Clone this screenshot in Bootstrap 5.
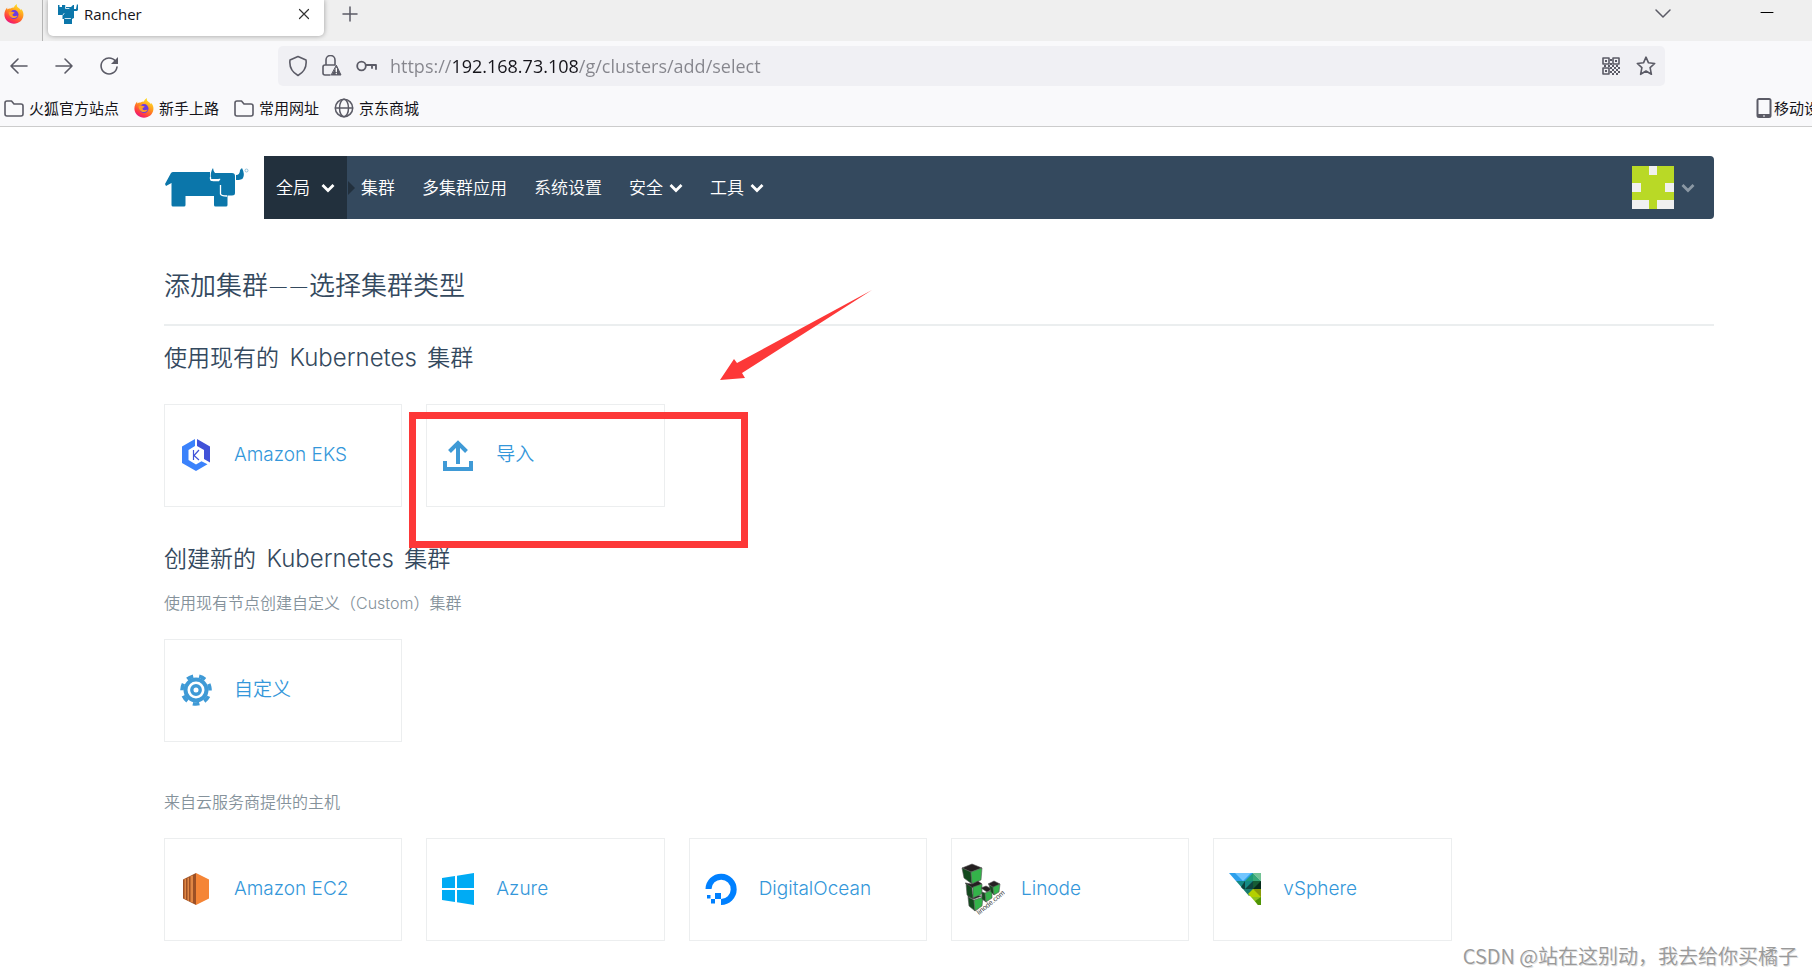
<!DOCTYPE html>
<html lang="zh-CN">
<head>
<meta charset="utf-8">
<meta name="viewport" content="width=device-width, initial-scale=1">
<title>Rancher</title>
<link href="https://cdn.jsdelivr.net/npm/bootstrap@5.3.0/dist/css/bootstrap.min.css" rel="stylesheet">
<style>
  :root { --ink: #34495e; --link: #3497da; --chrome-icon: #5b5b66; }
  body { font-family: Inter, "Noto Sans CJK SC", sans-serif; font-weight: 350; color: var(--ink); background: #fff; min-height: 100vh; overflow: hidden; position: relative; }
  svg { display: block; flex: none; }
  button { background: none; border: 0; padding: 0; color: inherit; font-weight: inherit; }
  a { text-decoration: none; }

  /* browser chrome */
  .chrome { font-family: "Open Sans", "Noto Sans CJK SC", sans-serif; font-weight: 400; font-size: 15px; line-height: 20px; color: #15141a; background: #f9f9fb; border-bottom: 1px solid #ccc; }
  .chrome svg { stroke-linecap: round; stroke-linejoin: round; }
  .tabstrip { height: 41px; background: #efefef; }
  .pinned { width: 43px; border-right: 1px solid #b5b5b5; padding: 4px 0 0 4px; }
  .tab-active { width: 276px; height: 36px; margin-left: 5px; padding: 0 14px 8px 10px; gap: 6px; background: #fff; border-radius: 0 0 5px 5px; box-shadow: 0 0 5px rgba(0,0,0,.35); }
  .strip-btn { height: 27px; }
  .minimize { margin: 0 38px 0 88px; }
  .toolbar { padding: 5px 147px 4px 9px; height: 49px; color: var(--chrome-icon); }
  .history-btns { gap: 25px; }
  .urlbar { background: #f0f0f4; border-radius: 5px; height: 40px; padding: 0 9px 0 10px; margin-left: 159px; }
  .url-icons { gap: 14px; margin-right: 12px; }
  .urlbar input { border: 0; outline: 0; padding: 0; min-width: 0; font-size: 18px; font-weight: 400; line-height: 24px; color: transparent;
    background: linear-gradient(90deg, #85858c 62px, #15141a 62px, #15141a 188px, #85858c 188px); -webkit-background-clip: text; background-clip: text; }
  .bookmarks { height: 36px; padding-left: 4px; gap: 15px; white-space: nowrap; }
  .bookmarks a { color: #15141a; gap: 5px; }
  .bookmarks svg { color: var(--chrome-icon); }
  .bookmarks .mobile-mark { width: 56px; overflow: hidden; gap: 1px; }

  /* rancher page */
  .page { padding: 29px 98px 0 164px; position: relative; }
  .brand { width: 100px; }
  .topnav { height: 63px; background: #34495e; border-radius: 0 4px 4px 0; color: #fff; font-size: 17px; line-height: 24px; }
  .topnav a, .topnav button { color: #fff; gap: 6px; }
  .scope { width: 83px; padding: 0 12px; background: #22303d; height: 63px; position: relative; }
  .scope::after { content: ""; position: absolute; left: 84px; top: 25px; border: 7px solid transparent; border-left-color: #22303d; border-right-width: 0; }
  .menu { gap: 27px; padding-left: 14px; }
  .topnav .account { margin-right: 19px; gap: 7px; }
  h1 { font-size: 26px; line-height: 32px; font-weight: 350; margin: 50px 0 22px; }
  h1 span { font-family: Lato, sans-serif; }
  .rule { border-top: 2px solid #ebeeef; }
  h2 { font-size: 23px; line-height: 28px; font-weight: 350; margin: 18px 0 32px; }
  h2 span { font-size: 24px; margin: 0 4px; }
  .h-create { margin: 38px 0 18px; }
  .note { font-size: 16px; line-height: 24px; color: #85929b; margin: 0 0 24px; }
  .note-hosts { margin-top: 48px; }
  .tile { height: 103px; border: 1px solid #eceeef; padding: 0 0 1px 9px; gap: 16px; color: var(--link); font-size: 19px; line-height: 24px; }
  .tile-icon { width: 44px; display: flex; justify-content: center; flex: none; }
  .callout { position: absolute; left: 409px; top: 162px; }
  .watermark { position: absolute; right: 14px; bottom: 7px; font-family: "Noto Sans CJK SC", sans-serif; font-size: 20px; line-height: 28px; color: #999; text-shadow: 1px 1px 0 #ddd; }
</style>
</head>
<body>
<svg width="0" height="0" class="position-absolute" aria-hidden="true">
  <defs>
    <linearGradient id="fxFlame" x1=".8" y1=".1" x2=".3" y2="1"><stop offset="0" stop-color="#ffe226"/><stop offset=".45" stop-color="#ff8a1e"/><stop offset=".8" stop-color="#ff3647"/><stop offset="1" stop-color="#e31587"/></linearGradient>
    <symbol id="fx" viewBox="0 0 20 20">
      <path fill="url(#fxFlame)" d="M13 0c-.6 2 .3 3 1.700 4 1 .6 1.800 1.300 2.300 2.300.1-.6.1-1-.1-1.600C19 6.500 19.700 9 19.400 11.500 18.900 16.300 14.900 19.700 10 19.700S.6 15.800.4 10.900C.3 8 1.500 5.400 3.200 3.600c-.1.8 0 1.300.2 1.800C4.200 4.600 5.500 4.300 6.600 4.600 7.600 3.700 9 3.300 10 3.500 10.300 2 11.500.7 13 0z"/>
      <circle cx="10" cy="10.600" r="4.500" fill="#6c3be0"/>
      <path fill="#ff9d25" d="M4.500 8.500c1.500-1.300 3.300-1 4.600-.4l1.500.3c0 .9-1.600 1-2 1.900-.2 1 .5 2 1.900 2 1.200 0 2-.8 3-.4-.8 1.700-3.500 2.800-5.600 1.800C5.800 12.800 4.800 11 4.500 8.500z"/>
    </symbol>
    <symbol id="folder" viewBox="0 0 20 17"><path d="M1 14V3a2 2 0 0 1 2-2h4.500l2.500 3h7a2 2 0 0 1 2 2v8a2 2 0 0 1-2 2H3a2 2 0 0 1-2-2z" fill="none" stroke="currentColor" stroke-width="1.600"/></symbol>
    <symbol id="chev" viewBox="0 0 14 10"><path d="M1.500 2 7 7.500 12.500 2" fill="none" stroke="currentColor" stroke-width="2.800"/></symbol>
  </defs>
</svg>

<header class="chrome">
  <div class="tabstrip d-flex">
    <div class="pinned"><svg width="20" height="20"><use href="#fx"/></svg></div>
    <div class="tab-active d-flex align-items-center">
      <svg width="20" height="20" viewBox="0 0 20 20" fill="#0b76aa"><path d="M0 1h1.500v2H4V1h3l1 2h5l2-2h1v13l-2 1v5H6v-5H4.500v-4H0z"/><path d="M16 5h2l1-5 1 1v5l-1 1h-3z"/><path d="M5 11l1-1.500M7 14.500h5.500M7.500 2.500v2H11" fill="none" stroke="#fff" stroke-width=".8"/></svg>
      <span class="me-auto">Rancher</span>
      <button aria-label="关闭标签页"><svg width="12" height="12" viewBox="0 0 12 12"><path d="M1.500 1.500l9 9M10.500 1.500l-9 9" stroke="#333" stroke-width="1.200"/></svg></button>
    </div>
    <button class="strip-btn ms-3" aria-label="新标签页"><svg width="20" height="20" viewBox="0 0 20 20"><path d="M10 3v14M3 10h14" stroke="#5b5b66" stroke-width="1.500"/></svg></button>
    <button class="strip-btn ms-auto" aria-label="列出标签页"><svg width="18" height="12" viewBox="0 0 18 12"><path d="M2 2l7 7 7-7" fill="none" stroke="#5b5b66" stroke-width="1.500"/></svg></button>
    <button class="strip-btn minimize" aria-label="最小化"><svg width="14" height="12" viewBox="0 0 14 12"><path d="M1 4.500h12" stroke="#000"/></svg></button>
  </div>
  <div class="toolbar d-flex align-items-center">
    <div class="history-btns d-flex align-items-center">
      <button aria-label="后退"><svg width="20" height="18" viewBox="0 0 20 18"><path d="M18 9H2M9 2L2 9l7 7" fill="none" stroke="currentColor" stroke-width="1.600"/></svg></button>
      <button aria-label="前进"><svg width="20" height="18" viewBox="0 0 20 18"><path d="M2 9h16M11 2l7 7-7 7" fill="none" stroke="currentColor" stroke-width="1.600"/></svg></button>
      <button aria-label="刷新"><svg width="20" height="20" viewBox="0 0 20 20"><path d="M17.500 7A8 8 0 1 0 18 11" fill="none" stroke="currentColor" stroke-width="1.600"/><path d="M19 1v7h-7z" fill="currentColor"/></svg></button>
    </div>
    <div class="urlbar d-flex align-items-center flex-grow-1">
      <div class="url-icons d-flex align-items-center">
        <svg width="20" height="22" viewBox="0 0 20 22"><path d="M10 1.500l8 3.500c.8 6-2 12-8 15.500C4 17 1.200 11 2 5z" fill="none" stroke="currentColor" stroke-width="1.600"/></svg>
        <svg width="20" height="22" viewBox="0 0 20 22"><path d="M8 20H3a2 2 0 0 1-2-2v-6a2 2 0 0 1 2-2h10M4 10V5a4 4 0 0 1 9 0v5" fill="none" stroke="currentColor" stroke-width="1.600"/><path d="M14.500 10.500l4.500 9.500H9.500z" fill="currentColor" stroke="currentColor"/><path d="M14.300 13.500v3M14.300 18.500v.1" stroke="#fff" stroke-width="1.400"/></svg>
        <svg width="22" height="12" viewBox="0 0 22 12"><g fill="none" stroke="currentColor" stroke-width="1.800"><circle cx="5.500" cy="6" r="4.300"/><path d="M10 5h10v4M16 5v3"/></g></svg>
      </div>
      <input class="flex-grow-1" type="text" aria-label="地址" value="https://192.168.73.108/g/clusters/add/select">
      <button aria-label="二维码"><svg width="18" height="18" viewBox="0 0 18 18"><g fill="none" stroke="currentColor" stroke-width="1.600"><path d="M1 1h6v6H1zM11 1h6v6h-6zM1 11h6v6H1z"/></g><path fill="currentColor" d="M3 3h2v2H3zM13 3h2v2h-2zM3 13h2v2H3zM8 2h2v2H8zM8 6h2v2H8zM2 8h2v2H2zM6 8h2v2H6zM10 8h2v2h-2zM14 8h2v2h-2zM8 10h2v2H8zM12 10h2v2h-2zM16 10h2v2h-2zM10 12h2v2h-2zM14 12h2v2h-2zM8 14h2v2H8zM12 14h2v2h-2zM16 14h2v2h-2zM10 16h2v2h-2zM14 16h2v2h-2z"/></svg></button>
      <button class="ms-3" aria-label="收藏"><svg width="20" height="20" viewBox="0 0 20 20"><path d="M10 1.200l2.500 5.600 6.200.7-4.600 4.200 1.300 6.600-5.400-3.300-5.400 3.300 1.300-6.600L1.300 7.500l6.200-.7z" fill="none" stroke="currentColor" stroke-width="1.600"/></svg></button>
    </div>
  </div>
  <nav class="bookmarks d-flex align-items-center" aria-label="书签">
    <a href="#" class="d-flex align-items-center"><svg width="20" height="17"><use href="#folder"/></svg>火狐官方站点</a>
    <a href="#" class="d-flex align-items-center"><svg width="20" height="20"><use href="#fx"/></svg>新手上路</a>
    <a href="#" class="d-flex align-items-center"><svg width="20" height="17"><use href="#folder"/></svg>常用网址</a>
    <a href="#" class="d-flex align-items-center"><svg width="20" height="20" viewBox="0 0 20 20"><g fill="none" stroke="currentColor" stroke-width="1.500"><circle cx="10" cy="10" r="8.700"/><ellipse cx="10" cy="10" rx="4.500" ry="8.700"/><path d="M1.500 10h17"/></g></svg>京东商城</a>
    <a href="#" class="mobile-mark d-flex align-items-center ms-auto"><svg width="17" height="20" viewBox="0 0 17 20"><path fill="currentColor" fill-rule="evenodd" d="M3 0h10a2.500 2.500 0 0 1 2.500 2.500v15A2.500 2.500 0 0 1 13 20H3a2.500 2.500 0 0 1-2.500-2.500v-15A2.500 2.500 0 0 1 3 0zM2.500 2v14h11V2zM7 17.500v1h2v-1z"/></svg>移动设</a>
  </nav>
</header>

<main class="page">
  <div class="d-flex align-items-center">
    <a href="#" class="brand" aria-label="Rancher">
      <svg width="86" height="40" viewBox="-1 0 86 40" fill="#0b76aa"><path d="M0 16L6 5Q7 4 8 4H45V11Q45 13 47 13H54Q56 12 55 10V5H67Q70 5 70 8V25Q70 27.500 67 27.500H62.500V37Q62.500 38.500 61 38.500H50.500Q49 38.500 49 37V28H20.500V37Q20.500 38.500 19 38.500H8Q6.500 38.500 6.500 37V15L1 18Z"/><path d="M46 11Q45 4 48 0Q48.500 4 50 5H56V10Q55 11 53 11Z"/><path d="M71 12V7Q75 7 75 2L77 0Q80 6 78 10Q77 12 71 12Z"/><path d="M45.500 9Q45 12.500 48 12.500H54M55.500 17V26Q56 28 62 28" fill="none" stroke="#fff" stroke-width="1.300"/><circle cx="81.500" cy="2.500" r="1.500" fill="none" stroke="#7fb5d0" stroke-width=".8"/></svg>
    </a>
    <nav class="topnav d-flex align-items-center flex-grow-1">
      <button class="scope d-flex align-items-center justify-content-between">全局<svg width="14" height="10"><use href="#chev"/></svg></button>
      <div class="menu d-flex align-items-center">
        <a href="#">集群</a>
        <a href="#">多集群应用</a>
        <a href="#">系统设置</a>
        <button class="d-flex align-items-center">安全<svg width="14" height="10"><use href="#chev"/></svg></button>
        <button class="d-flex align-items-center">工具<svg width="14" height="10"><use href="#chev"/></svg></button>
      </div>
      <button class="account d-flex align-items-center ms-auto" aria-label="用户菜单">
        <svg width="42" height="43" viewBox="0 0 42 43"><path fill="#b9d926" d="M0 0h42v43H0z"/><path fill="#f0f0f0" d="M17 0h8v9h-8zM0 17h9v9H0zM33 17h9v9h-9zM0 34h17v9H0zM25 34h17v9H25z"/></svg>
        <svg width="14" height="10" color="#8b98a4"><use href="#chev"/></svg>
      </button>
    </nav>
  </div>

  <h1>添加集群<span>——</span>选择集群类型</h1>
  <div class="rule"></div>

  <h2>使用现有的 <span>Kubernetes</span> 集群</h2>
  <div class="row gx-4">
    <div class="col-2"><a href="#" class="tile d-flex align-items-center"><span class="tile-icon"><svg width="28" height="32" viewBox="0 0 28 32"><path fill="#3b82fb" d="M13 0v7L6.500 11v10L14 25.500l5.500-3.200 6 3L14 32 0 24V7.500z"/><path fill="#4152d8" d="M15 0l13 7.500v16l-6-3.500V11L15 7z"/><path d="M11.500 11v10M17 11l-5 5.500 5 4.500" fill="none" stroke="#4152d8" stroke-width="1.200"/></svg></span>Amazon EKS</a></div>
    <div class="col-2"><a href="#" class="tile d-flex align-items-center"><span class="tile-icon"><svg width="30" height="31" viewBox="0 0 30 31" fill="none" stroke="#3f9ad6" stroke-width="4"><path d="M2 21v8h26v-8M15 24V4M6.500 11.500L15 3l8.500 8.500"/></svg></span>导入</a></div>
  </div>

  <h2 class="h-create">创建新的 <span>Kubernetes</span> 集群</h2>
  <p class="note">使用现有节点创建自定义（Custom）集群</p>
  <div class="row gx-4">
    <div class="col-2"><a href="#" class="tile d-flex align-items-center"><span class="tile-icon"><svg width="32" height="32" viewBox="-16 -16 32 32" fill="none" stroke="#3f9ad6"><circle r="10.500" stroke-width="4"/><circle r="4.200" stroke-width="3.400"/><circle r="14" stroke-width="3.600" stroke-dasharray="6.600 5.967" transform="rotate(76)"/></svg></span>自定义</a></div>
  </div>

  <p class="note note-hosts">来自云服务商提供的主机</p>
  <div class="row gx-4">
    <div class="col-2"><a href="#" class="tile d-flex align-items-center"><span class="tile-icon"><svg width="26" height="32" viewBox="0 0 26 32"><path fill="#9d5025" d="M0 6.500l3-1.500 3-1.500 4-2L13 0v32l-3-1.500-4-2-3-1.500-3-1.500z"/><path fill="#e08644" d="M1.500 6v20L3 26.500V5.500zM4.500 5v22.500l1.500.5V4.500zM7.500 3v26l2.500.6V2.500z"/><path fill="#f58536" d="M13 0l13 6.500v19L13 32z"/></svg></span>Amazon EC2</a></div>
    <div class="col-2"><a href="#" class="tile d-flex align-items-center"><span class="tile-icon"><svg width="32" height="32" viewBox="0 0 32 32" fill="#00abf4"><path d="M0 5l13-2v12H0zM15 2.700L32 0v15H15zM0 17h13v12L0 27zM15 17h17v15l-17-2.700z"/></svg></span>Azure</a></div>
    <div class="col-2"><a href="#" class="tile d-flex align-items-center"><span class="tile-icon"><svg width="32" height="32" viewBox="0 0 32 32"><path d="M3.500 16A12.600 12.600 0 1 1 16 28.900" fill="none" stroke="#0080ff" stroke-width="6"/><path fill="#0080ff" d="M10 20h6v6h-6zM6 26h4v4.500H6zM2 22h3.500v3.500H2z"/></svg></span>DigitalOcean</a></div>
    <div class="col-2"><a href="#" class="tile d-flex align-items-center"><span class="tile-icon"><svg width="44" height="52" viewBox="0 0 44 52"><g stroke="#555" stroke-width=".6"><path fill="#231f20" d="M1 5L11 1l10 4-11 4z"/><path fill="#124a1d" d="M1 5l9 4 1 12-8-6z"/><path fill="#34b34a" d="M10 9l11-4-1 12-9 4z"/><path fill="#231f20" d="M13 32l-6-2v4l6 2 8-3z"/><path fill="#124a1d" d="M5 20l6 4 1 12-6-4z"/><path fill="#231f20" d="M4 20l7 1 6-3 4 3-9 4z"/><path fill="#34b34a" d="M12 24l9-3v10l-9 4z"/><path fill="#124a1d" d="M7 34l6 3 1 11-6-5z"/><path fill="#34b34a" d="M13 37l9-3-1 9-7 5z"/><path fill="#231f20" d="M20 25l5-2 6 3-5 3z"/><path fill="#124a1d" d="M21 29l3 1 1 9-4-3z"/><path fill="#34b34a" d="M24 30l7-3v8l-6 4z"/><path fill="#231f20" d="M27 21l6-3 6 3-6 4z"/><path fill="#124a1d" d="M28 22l4 2 1 8-3-3z"/><path fill="#34b34a" d="M32 24l7-3-1 8-5 3z"/></g><text transform="translate(18 52) rotate(-39)" font-family="Liberation Sans" font-size="7" font-weight="400" fill="#333">linode.com</text></svg></span>Linode</a></div>
    <div class="col-2"><a href="#" class="tile d-flex align-items-center"><span class="tile-icon"><svg width="32" height="32" viewBox="0 0 32 32"><path fill="#2da0ec" d="M0 0h24v8H7z"/><path fill="#72c6ff" d="M6 0l8 8 8-8zM9 0l5 8 3-8z"/><path fill="#1d9b78" d="M24 0v8h-8z"/><path fill="#73c395" d="M24 0h8v8z"/><path fill="#36a777" d="M24 0v8h8z"/><path fill="#148a85" d="M7 8h17v8H14z"/><path fill="#0e453f" d="M16 8l-4 6 2 2h10v-8l-8 8z"/><path fill="#052b1b" d="M24 8h8v8h-8z"/><path fill="#155c35" d="M24 8h8l-8 8z"/><path fill="#187b6c" d="M14 16h10v4l-4 3z"/><path fill="#b4d000" d="M19 21l5-5h8v8H22z"/><path fill="#8a9a08" d="M24 16h8v8z"/><path fill="#8fc31f" d="M22 24h10v8l-3 0z"/><path fill="#4f9405" d="M32 24v8h-3l-3-4z"/></svg></span>vSphere</a></div>
  </div>

  <svg class="callout" width="470" height="260" viewBox="0 0 470 260" aria-hidden="true"><path fill="none" stroke="#fd3838" stroke-width="7" d="M3.500 126.500h332v129H3.500z"/><path fill="#fd3838" d="M311 91l14-21 3 4L463 1 333 84l3 5z"/></svg>
</main>

<div class="watermark">CSDN @站在这别动，我去给你买橘子</div>
<script src="https://cdn.jsdelivr.net/npm/bootstrap@5.3.0/dist/js/bootstrap.bundle.min.js"></script>
</body>
</html>
